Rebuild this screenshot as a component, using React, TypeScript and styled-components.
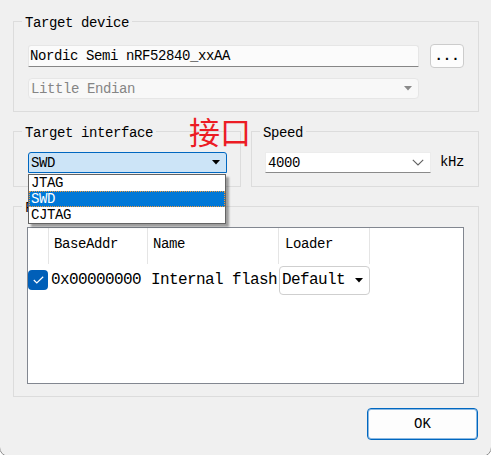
import React from 'react';
import styled, { createGlobalStyle } from 'styled-components';

const GlobalStyle = createGlobalStyle`
  html, body { margin: 0; padding: 0; background: #ffffff; overflow: hidden; }
  body { font-family: "Liberation Mono", monospace; }
`;

const Window = styled.div`
  position: relative;
  box-sizing: border-box;
  width: 493px;
  height: 458px;
  margin: -1px 0 0 -1px;
  padding: 11px 12px 0 13px;
  background: #f0f0f0;
  border: 1px solid #8f8f8f;
  border-radius: 0 0 10px 10px;
  display: flex;
  flex-direction: column;
  font-family: "Liberation Mono", monospace;
  font-size: 14px;
  letter-spacing: -0.4px;
  color: #000;
`;

const Group = styled.fieldset<{ $width?: number }>`
  box-sizing: border-box;
  margin: 0;
  padding: 0;
  min-width: 0;
  width: ${(p) => (p.$width ? `${p.$width}px` : 'auto')};
  border: 1px solid #dcdcdc;
`;

const Legend = styled.legend`
  box-sizing: border-box;
  margin-left: 8px;
  padding: 4px 3px 0;
  height: 21px;
  line-height: 17px;
`;

const GroupBody = styled.div<{ $pad: string }>`
  padding: ${(p) => p.$pad};
  display: flex;
  flex-direction: column;
`;

const FieldRow = styled.div<{ $gap: number; $top?: number }>`
  display: flex;
  align-items: flex-start;
  gap: ${(p) => p.$gap}px;
  margin-top: ${(p) => p.$top ?? 0}px;
`;

const TextField = styled.div`
  box-sizing: border-box;
  width: 391px;
  height: 22px;
  margin-top: 1px;
  padding-left: 1px;
  background: #fbfbfb;
  border: 1px solid #e6e6e6;
  border-bottom: 1px solid #868686;
  border-radius: 3px 3px 0 0;
  line-height: 21px;
`;

const SmallButton = styled.button`
  box-sizing: border-box;
  width: 34px;
  height: 24px;
  padding: 0 0 3px;
  background: #fdfdfd;
  border: 1px solid #cccccc;
  border-radius: 4px;
  font: inherit;
  font-weight: 700;
  letter-spacing: 0;
  color: #000;
  display: flex;
  align-items: flex-end;
  justify-content: center;
`;

type ComboVariant = 'disabled' | 'open' | 'plain' | 'cell';

const comboBg: Record<ComboVariant, string> = {
  disabled: '#f8f8f8',
  open: '#cce4f7',
  plain: '#ffffff',
  cell: '#ffffff',
};
const comboBorder: Record<ComboVariant, string> = {
  disabled: '1px solid #e6e6e6',
  open: '1px solid #0067c0',
  plain: '1px solid #ececec',
  cell: '1px solid #cfcfcf',
};

const Combo = styled.div<{ $variant: ComboVariant; $width: number; $height: number }>`
  box-sizing: border-box;
  width: ${(p) => p.$width}px;
  height: ${(p) => p.$height}px;
  display: flex;
  align-items: center;
  justify-content: space-between;
  padding: 0 6px 0 2px;
  background: ${(p) => comboBg[p.$variant]};
  border: ${(p) => comboBorder[p.$variant]};
  border-bottom-color: ${(p) => (p.$variant === 'plain' ? '#8a8a8a' : undefined)};
  border-radius: ${(p) => (p.$variant === 'plain' ? '0' : p.$variant === 'open' ? '3px 3px 0 0' : '4px')};
  color: ${(p) => (p.$variant === 'disabled' ? '#858585' : '#000')};
`;

const Triangle = ({ color }: { color: string }) => (
  <svg width="8" height="5" viewBox="0 0 8 5">
    <path d="M0 0 H8 L4 4.5 Z" fill={color} />
  </svg>
);

const Chevron = () => (
  <svg width="12" height="7" viewBox="0 0 12 7">
    <path d="M0.8 0.8 L6 6 L11.2 0.8" fill="none" stroke="#606060" strokeWidth="1.1" />
  </svg>
);

const SplitRow = styled.div`
  margin-top: 9px;
  display: flex;
  gap: 10px;
`;

const Unit = styled.span`
  line-height: 21px;
`;

const FlashGroup = styled(Group)`
  margin-top: 9px;
`;

const Table = styled.div`
  box-sizing: border-box;
  width: 437px;
  height: 157px;
  background: #ffffff;
  border: 1px solid #828790;
  display: grid;
  grid-template-columns: 21px 99px 131px 91px;
  grid-template-rows: 36px 32px;
  align-content: start;
`;

const HeadCell = styled.div<{ $pad?: number }>`
  box-sizing: border-box;
  border-right: 1px solid #e5e5e5;
  padding: 0 0 5px ${(p) => p.$pad ?? 5}px;
  display: flex;
  align-items: center;
`;

const Cell = styled.div<{ $pad: number }>`
  display: flex;
  align-items: center;
  padding-left: ${(p) => p.$pad}px;
  font-size: 16px;
  letter-spacing: -0.6px;
  white-space: nowrap;
`;

const CheckBox = styled.div`
  width: 20px;
  height: 20px;
  border-radius: 4px;
  background: #005fb8;
  display: flex;
  align-items: center;
  justify-content: center;
`;

const Footer = styled.div`
  margin-top: 11px;
  display: flex;
  justify-content: flex-end;
  padding-right: 1px;
`;

const OkButton = styled.button`
  box-sizing: border-box;
  width: 111px;
  height: 32px;
  background: #fdfdfd;
  border: 1px solid #0067c0;
  box-shadow: inset 0 0 0 1px rgba(0, 103, 192, 0.45);
  border-radius: 4px;
  font: inherit;
  color: #000;
`;

const DropList = styled.ul`
  position: absolute;
  left: 28px;
  top: 174px;
  width: 198px;
  box-sizing: border-box;
  margin: 0;
  padding: 0;
  list-style: none;
  background: #ffffff;
  border: 1px solid #646464;
  box-shadow: 3px 3px 2px rgba(0, 0, 0, 0.35);
  z-index: 2;
`;

const DropItem = styled.li<{ $selected?: boolean }>`
  height: 16px;
  line-height: 16px;
  padding-left: 2px;
  background: ${(p) => (p.$selected ? '#0078d7' : 'transparent')};
  color: ${(p) => (p.$selected ? '#ffffff' : '#000')};
  outline: ${(p) => (p.$selected ? '1px dotted #f09a3a' : 'none')};
  outline-offset: -1px;
`;

const Annotation = styled.div`
  position: absolute;
  left: 189px;
  top: 113px;
  font-family: "Noto Sans CJK SC", sans-serif;
  font-size: 31px;
  line-height: 36px;
  letter-spacing: 0;
  color: #ec1c24;
  z-index: 3;
`;

export default function App() {
  return (
    <>
      <GlobalStyle />
      <Window>
        <Group>
          <Legend>Target device</Legend>
          <GroupBody $pad="12px 0 12px 14px">
            <FieldRow $gap={11}>
              <TextField>Nordic Semi nRF52840_xxAA</TextField>
              <SmallButton>...</SmallButton>
            </FieldRow>
            <FieldRow $gap={0} $top={10}>
              <Combo $variant="disabled" $width={391} $height={21}>
                <span>Little Endian</span>
                <Triangle color="#8a8a8a" />
              </Combo>
            </FieldRow>
          </GroupBody>
        </Group>

        <SplitRow>
          <Group $width={228}>
            <Legend>Target interface</Legend>
            <GroupBody $pad="10px 0 13px 14px">
              <Combo $variant="open" $width={199} $height={21}>
                <span>SWD</span>
                <Triangle color="#000000" />
              </Combo>
            </GroupBody>
          </Group>
          <Group $width={228}>
            <Legend>Speed</Legend>
            <GroupBody $pad="10px 0 13px 13px">
              <FieldRow $gap={9}>
                <Combo $variant="plain" $width={166} $height={21}>
                  <span>4000</span>
                  <Chevron />
                </Combo>
                <Unit>kHz</Unit>
              </FieldRow>
            </GroupBody>
          </Group>
        </SplitRow>

        <FlashGroup>
          <Legend>Flash banks</Legend>
          <GroupBody $pad="10px 0 12px 13px">
            <Table>
              <HeadCell />
              <HeadCell>BaseAddr</HeadCell>
              <HeadCell>Name</HeadCell>
              <HeadCell $pad={6}>Loader</HeadCell>
              <Cell $pad={0}>
                <CheckBox>
                  <svg width="11" height="8" viewBox="0 0 11 8">
                    <path d="M0.8 4 L3.8 7 L10.2 0.8" fill="none" stroke="#ffffff" strokeWidth="1.2" />
                  </svg>
                </CheckBox>
              </Cell>
              <Cell $pad={2}>0x00000000</Cell>
              <Cell $pad={3}>Internal flash</Cell>
              <Cell $pad={0}>
                <Combo $variant="cell" $width={91} $height={29}>
                  <span>Default</span>
                  <Triangle color="#000000" />
                </Combo>
              </Cell>
            </Table>
          </GroupBody>
        </FlashGroup>

        <Footer>
          <OkButton>OK</OkButton>
        </Footer>

        <DropList>
          <DropItem>JTAG</DropItem>
          <DropItem $selected>SWD</DropItem>
          <DropItem>CJTAG</DropItem>
        </DropList>

        <Annotation>接口</Annotation>
      </Window>
    </>
  );
}
